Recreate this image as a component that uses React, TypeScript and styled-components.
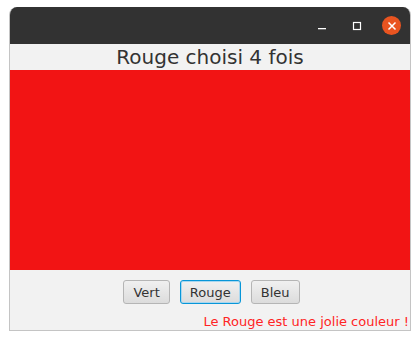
import React from 'react';
import styled, { createGlobalStyle } from 'styled-components';

const GlobalStyle = createGlobalStyle`
  html, body {
    margin: 0;
    padding: 0;
    background: #ffffff;
  }
  body {
    font-family: "DejaVu Sans", "Noto Sans", sans-serif;
  }
`;

const Page = styled.div`
  width: 420px;
  height: 340px;
  padding: 7px 0 0 9px;
  box-sizing: border-box;
`;

const Window = styled.div`
  width: 402px;
  height: 324px;
  display: flex;
  flex-direction: column;
  border: 1px solid #c4c4c4;
  border-top: none;
  border-radius: 8px 8px 0 0;
  box-sizing: border-box;
  overflow: hidden;
  background: #f2f2f2;
`;

const TitleBar = styled.div`
  height: 37px;
  flex: none;
  background: #323232;
  display: flex;
  align-items: center;
  justify-content: flex-end;
  padding-right: 1px;
`;

const WinButton = styled.div`
  width: 35px;
  height: 24px;
  display: flex;
  align-items: center;
  justify-content: center;
`;

const CloseDot = styled.div`
  width: 19px;
  height: 19px;
  border-radius: 50%;
  background: #e95420;
  display: flex;
  align-items: center;
  justify-content: center;
`;

const Heading = styled.div`
  height: 26px;
  flex: none;
  display: flex;
  align-items: center;
  justify-content: center;
  font-size: 20px;
  color: #333333;
`;

const ColorPanel = styled.div<{ $color: string }>`
  height: 200px;
  flex: none;
  background: ${(p) => p.$color};
`;

const ButtonRow = styled.div`
  display: flex;
  justify-content: center;
  gap: 10px;
  padding-top: 10px;
  padding-left: 3px;
`;

const Button = styled.button<{ $focused?: boolean }>`
  height: 24px;
  padding: 0 9px;
  font-family: "DejaVu Sans", "Noto Sans", sans-serif;
  font-size: 13px;
  color: #333333;
  border-radius: 3px;
  border: 1px solid ${(p) => (p.$focused ? '#0896d8' : '#b5b5b5')};
  box-shadow: ${(p) => (p.$focused ? 'inset 0 0 0 1px #a9d7ef' : 'none')};
  background: linear-gradient(#f0f0f0, #dcdcdc);
  cursor: pointer;
`;

const Message = styled.div`
  margin-top: auto;
  padding: 0 1px 1px 0;
  text-align: right;
  font-size: 13px;
  color: #ff2424;
`;

export default function App() {
  return (
    <>
      <GlobalStyle />
      <Page>
        <Window>
          <TitleBar>
            <WinButton>
              <svg width="10" height="10" viewBox="0 0 10 10">
                <rect x="1" y="7" width="8" height="1.3" fill="#ffffff" />
              </svg>
            </WinButton>
            <WinButton>
              <svg width="10" height="10" viewBox="0 0 10 10">
                <rect x="1.5" y="1.5" width="7" height="7" fill="none" stroke="#ffffff" strokeWidth="1.2" />
              </svg>
            </WinButton>
            <WinButton>
              <CloseDot>
                <svg width="10" height="10" viewBox="0 0 10 10">
                  <path d="M1.5 1.5 L8.5 8.5 M8.5 1.5 L1.5 8.5" stroke="#ffffff" strokeWidth="1.5" />
                </svg>
              </CloseDot>
            </WinButton>
          </TitleBar>
          <Heading>Rouge choisi 4 fois</Heading>
          <ColorPanel $color="#f21414" />
          <ButtonRow>
            <Button>Vert</Button>
            <Button $focused>Rouge</Button>
            <Button>Bleu</Button>
          </ButtonRow>
          <Message>Le Rouge est une jolie couleur !</Message>
        </Window>
      </Page>
    </>
  );
}
